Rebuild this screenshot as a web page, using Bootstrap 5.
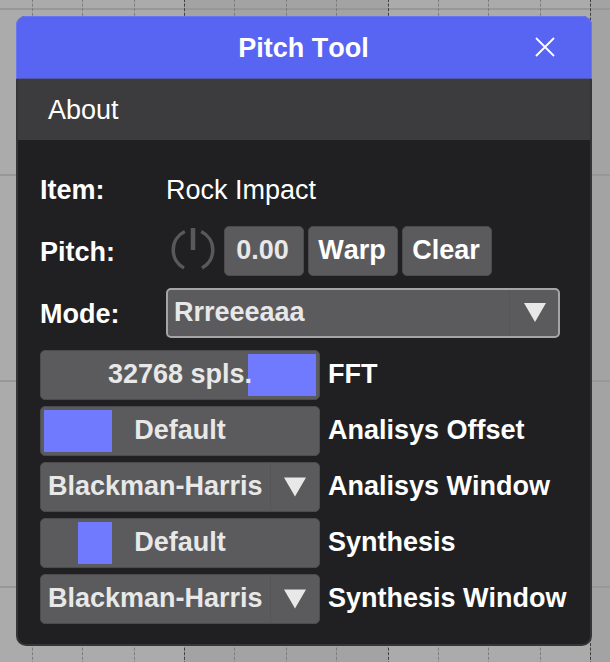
<!DOCTYPE html>
<html lang="en">
<head>
<meta charset="utf-8">
<meta name="viewport" content="width=device-width, initial-scale=1">
<title>Pitch Tool</title>
<link href="https://cdn.jsdelivr.net/npm/bootstrap@5.3.0/dist/css/bootstrap.min.css" rel="stylesheet">
<style>
body{font:27px/48px "Liberation Sans",Arial,sans-serif;font-kerning:none;background:#ababab;color:#fff;width:610px;height:662px}
.timeline{left:0;top:0;z-index:0}
.tool{z-index:1;width:576px;height:630px;margin:16px 0 0 16px;border-radius:10px;background:#202022;border:2px solid #353538;border-top:0}
.tool-head{height:63px;margin:0 -2px;background:#5865f2;border:1px solid #6a76f0;border-bottom:1px solid #5158a8;border-radius:9px 9px 0 0;padding:1px 1px 0 0}
.tool-menu{height:61px;background:#3c3c3e;padding-left:30px}
.tool-menu a{color:#fff}
.tool-body{padding:26px 0 0 22px}
.tag-col{width:126px}
.ctl{height:50px;background:#5b5b5d;border:1px solid #4c4c4e;border-radius:5px;color:#e8e8e8;font:inherit;font-weight:700;line-height:46px;padding:0;white-space:nowrap;text-align:left}
button.ctl{display:block;color:#fff;text-align:center;padding:0 2px 2px 0}
.ctl-wide{width:280px}
.ctl-mode{width:394px;border:2px solid #a5a5a7;line-height:44px;padding-left:6px}
.ctl-pick{padding-left:7px}
.arrow-cell{width:49px;border-left:1px solid #565658}
.pitch-row{height:62px;padding-top:12px}
.mode-row{height:74px;padding-top:12px}
.mode-row .tag-col{padding-top:2px}
.pitch-row .tag-col{padding-top:2px}
.param{height:56px}
.thumb{background:#707aff;top:3px;height:42px}
.slide-text{left:0;right:0;top:0;z-index:1}
.param .lbl{margin-left:8px;line-height:48px}
</style>
<script src="https://cdn.jsdelivr.net/npm/bootstrap@5.3.0/dist/js/bootstrap.bundle.min.js"></script>
</head>
<body class="position-relative overflow-hidden">
<svg class="timeline position-absolute" width="610" height="662" aria-hidden="true">
<path fill="#a3a3a3" d="M184 0h204v662H184zM590 0h20v662h-20z"/>
<path stroke="#979797" stroke-width="2" d="M0 9h610M0 175h610M0 381h610M0 587h610"/>
<path stroke="#7c7c7c" stroke-dasharray="3 1.6" stroke-dashoffset="1" d="M32.500 0v662M82.500 0v662M134.500 0v662M234.500 0v662M286.500 0v662M336.500 0v662M438.500 0v662M488.500 0v662M540.500 0v662"/>
<path stroke="#3f3f3f" stroke-dasharray="3 1.6" stroke-dashoffset="1" d="M184.500 0v662M388.500 0v662M590.500 0v662"/>
</svg>
<main class="tool position-relative">
<header class="tool-head d-flex align-items-center justify-content-center position-relative fw-bold">
<span>Pitch Tool</span>
<svg class="position-absolute" style="right:36px;top:20px" width="20" height="20" fill="none" stroke="#fff" stroke-width="1.8" role="img" aria-label="Close"><path d="M1 1l18 18M19 1L1 19"/></svg>
</header>
<nav class="tool-menu d-flex align-items-center"><a class="text-decoration-none" href="#">About</a></nav>
<div class="tool-body">
<div class="d-flex"><b class="tag-col">Item:</b><span>Rock Impact</span></div>
<div class="d-flex pitch-row">
<b class="tag-col">Pitch:</b>
<svg width="58" height="50" fill="none" stroke="#59595b" aria-hidden="true"><path stroke-width="3.500" d="M18.800 5.500A20.500 20.500 0 0 0 18 42M35.200 5.500A20.500 20.500 0 0 1 36 42"/><path stroke-width="4.500" d="M27 2v22"/></svg>
<div class="d-flex gap-1"><div class="ctl text-center" style="width:80px;padding-right:3px">0.00</div><button class="ctl" style="width:90px">Warp</button><button class="ctl" style="width:90px">Clear</button></div>
</div>
<div class="d-flex mode-row">
<b class="tag-col">Mode:</b>
<div class="ctl ctl-mode d-flex justify-content-between"><span>Rrreeeaaa</span><span class="arrow-cell d-flex"><svg width="48" height="46"><path fill="#e8e8e8" d="M14 13h22L25 32z"/></svg></span></div>
</div>
<div class="params">
<div class="param d-flex"><div class="ctl ctl-wide text-center position-relative"><span class="position-absolute thumb" style="left:207px;width:68px"></span><span class="slide-text position-absolute">32768 spls.</span></div><b class="lbl">FFT</b></div>
<div class="param d-flex"><div class="ctl ctl-wide text-center position-relative"><span class="position-absolute thumb" style="left:3px;width:68px"></span><span class="slide-text position-absolute">Default</span></div><b class="lbl">Analisys Offset</b></div>
<div class="param d-flex"><div class="ctl ctl-wide ctl-pick d-flex justify-content-between"><span>Blackman-Harris</span><span class="arrow-cell d-flex"><svg width="48" height="48"><path fill="#e8e8e8" d="M13 14.500h22L24 33.500z"/></svg></span></div><b class="lbl">Analisys Window</b></div>
<div class="param d-flex"><div class="ctl ctl-wide text-center position-relative"><span class="position-absolute thumb" style="left:37px;width:34px"></span><span class="slide-text position-absolute">Default</span></div><b class="lbl">Synthesis</b></div>
<div class="param d-flex"><div class="ctl ctl-wide ctl-pick d-flex justify-content-between"><span>Blackman-Harris</span><span class="arrow-cell d-flex"><svg width="48" height="48"><path fill="#e8e8e8" d="M13 14.500h22L24 33.500z"/></svg></span></div><b class="lbl">Synthesis Window</b></div>
</div>
</div>
</main>
</body>
</html>
